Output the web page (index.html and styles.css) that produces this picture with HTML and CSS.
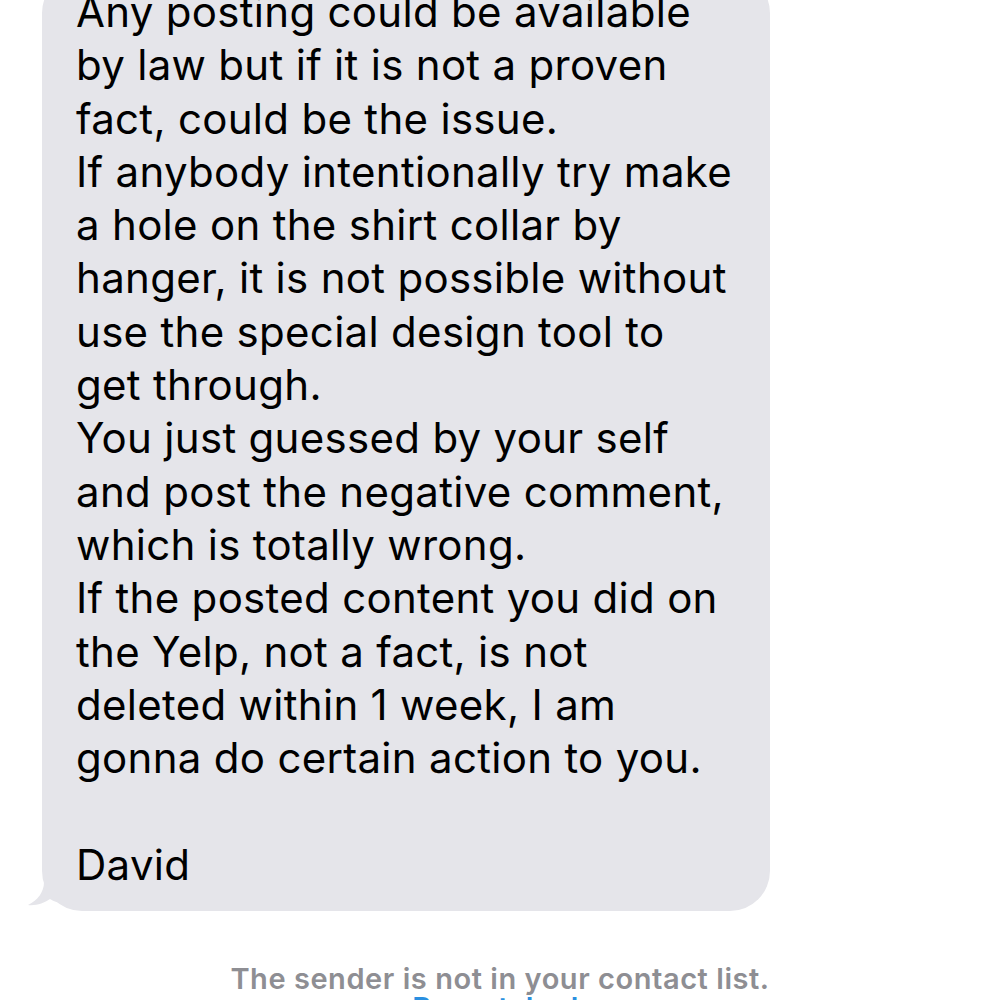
FILE: index.html
```html
<!DOCTYPE html>
<html>
<head>
<meta charset="utf-8">
<link rel="stylesheet" href="styles.css">
</head>
<body>
<div class="thread">
  <div class="bubble">
    <p class="msg">Any posting could be available<br>by law but if it is not a proven<br>fact, could be the issue.<br>If anybody intentionally try make<br>a hole on the shirt collar by<br>hanger, it is not possible without<br>use the special design tool to<br>get through.<br>You just guessed by your self<br>and post the negative comment,<br>which is totally wrong.<br>If the posted content you did on<br>the Yelp, not a fact, is not<br>deleted within 1 week, I am<br>gonna do certain action to you.<br><br>David</p>
    <svg class="tail" width="60" height="40" viewBox="0 0 60 40">
      <path d="M16 0 L16 10 C16 20 10 28 0 33 C8 34 16 31 22 27 C30 32 40 33 50 33 L50 0 Z" fill="#e5e5ea"/>
    </svg>
  </div>
  <div class="notice">
    <p class="notice-text">The sender is not in your contact list.</p>
    <p class="notice-link">Report Junk</p>
  </div>
</div>
</body>
</html>
```
FILE: styles.css
```css
html, body {
  margin: 0;
  padding: 0;
  background: #ffffff;
  overflow: hidden;
}
.thread {
  width: 1000px;
  height: 1000px;
  overflow: hidden;
}
.bubble {
  position: relative;
  margin-top: -27px;
  margin-left: 42px;
  width: 728px;
  box-sizing: border-box;
  padding: 12px 20px 20px 34px;
  background: #e5e5ea;
  border-radius: 40px;
}
.msg {
  margin: 0;
  font-family: "Inter", "Noto Sans", sans-serif;
  font-size: 42px;
  line-height: 53.3px;
  color: #000;
  letter-spacing: 0.3px;
}
.tail {
  position: absolute;
  left: -14px;
  bottom: -1px;
}
.notice {
  text-align: center;
  font-family: "Inter", "Noto Sans", sans-serif;
  padding-top: 53px;
}
.notice-text {
  margin: 0;
  font-size: 29px;
  font-weight: 600;
  line-height: 30px;
  letter-spacing: 0.55px;
  color: #8e8e93;
}
.notice-link {
  margin: 0;
  font-size: 29px;
  font-weight: 600;
  line-height: 28px;
  letter-spacing: 0.5px;
  color: #2a8fe0;
}
```
